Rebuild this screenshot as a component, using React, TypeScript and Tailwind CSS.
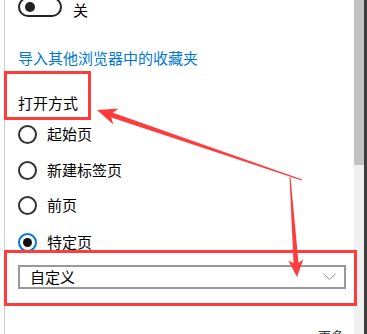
const font = { fontFamily: '"Noto Sans CJK SC", "Noto Sans", sans-serif' };

function Radio({ label, checked = false }: { label: string; checked?: boolean }) {
  return (
    <div className="flex h-[20px] items-center gap-[10px]">
      <span
        className={
          checked
            ? "flex h-[19px] w-[19px] items-center justify-center rounded-full border-2 border-[#0078d7]"
            : "flex h-[19px] w-[19px] items-center justify-center rounded-full border-2 border-[#333333]"
        }
      >
        {checked && <span className="h-[9px] w-[9px] rounded-full bg-[#111111]" />}
      </span>
      <span className="text-[15px] leading-[20px] text-black">{label}</span>
    </div>
  );
}

export default function App() {
  return (
    <div className="relative flex h-[334px] w-[367px] overflow-hidden bg-white" style={font}>
      {/* settings pane */}
      <div className="ml-[4px] flex w-[350px] flex-col border-l border-[#cfcfcf] pl-[13px]">
        <div className="mt-[-3px] flex h-[20px] items-start gap-[11px]">
          <span className="flex h-[20px] w-[44px] items-center rounded-full border-2 border-[#222222] pl-[5px]">
            <span className="h-[10px] w-[10px] rounded-full bg-[#222222]" />
          </span>
          <span className="mt-[3px] text-[15px] leading-[20px] text-black">关</span>
        </div>

        <a className="mt-[31px] text-[15px] leading-[20px] text-[#0078d7]">导入其他浏览器中的收藏夹</a>

        <div className="mt-[25px] text-[15px] leading-[20px] text-black">打开方式</div>

        <div className="mt-[11px]">
          <Radio label="起始页" />
        </div>
        <div className="mt-[16px]">
          <Radio label="新建标签页" />
        </div>
        <div className="mt-[15px]">
          <Radio label="前页" />
        </div>
        <div className="mt-[17px]">
          <Radio label="特定页" checked />
        </div>

        <div className="mt-[13px] flex h-[31px] w-[328px] items-center justify-between border-2 border-[#999999] pl-[10px] pr-[8px]">
          <span className="text-[15px] leading-[20px] text-black">自定义</span>
          <svg width="13" height="8" viewBox="0 0 13 8" fill="none">
            <path d="M0.5 0.8 L6.5 6.6 L12.5 0.8" stroke="#8a8a8a" strokeWidth="1" />
          </svg>
        </div>

        <div className="mt-[38px] flex justify-end pr-[10px] text-[13px] leading-[18px] text-[#333333]">更多</div>
      </div>

      {/* scrollbar */}
      <div className="flex w-[10px] flex-col bg-[#f0f0f0]">
        <div className="h-[165px] bg-[#c2c2c2]" />
      </div>
      <div className="w-[3px] bg-[#3c3c3c]" />

      {/* annotations */}
      <div className="absolute left-[4px] top-[71px] h-[49px] w-[87px] border-[3px] border-[#ff3c3c]" />
      <div className="absolute left-[4px] top-[250px] h-[56px] w-[353px] border-[3px] border-[#ff3c3c]" />
      <svg className="pointer-events-none absolute left-0 top-0" width="367" height="334" viewBox="0 0 367 334">
        <polygon
          points="97,110 118.5,108.6 112.9,112.8 302.2,179.5 301.8,180.5 111.3,117.6 113.3,124.4"
          fill="#ff3c3c"
        />
        <polygon
          points="297,277 303.3,259.5 298.5,262.8 290.5,177 289.5,177 293.5,263.2 288.3,260.5"
          fill="#ff3c3c"
        />
      </svg>
    </div>
  );
}
